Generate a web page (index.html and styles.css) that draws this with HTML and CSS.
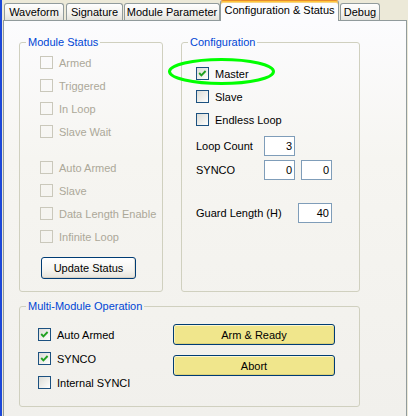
FILE: index.html
```html
<!DOCTYPE html>
<html>
<head>
<meta charset="utf-8">
<title>Configuration &amp; Status</title>
<link rel="stylesheet" href="styles.css">
</head>
<body>
<div class="window">
  <div class="tabs">
    <div class="tab t-wave">Waveform</div>
    <div class="tab t-sig">Signature</div>
    <div class="tab t-mod">Module Parameter</div>
    <div class="tab tab-active t-conf">Configuration &amp; Status</div>
    <div class="tab t-dbg">Debug</div>
  </div>
  <div class="panel">
    <div class="top-row">
      <fieldset class="group g-status">
        <legend>Module Status</legend>
        <div class="status-body">
          <div class="cb-list first">
            <div class="cb disabled"><span class="box"></span>Armed</div>
            <div class="cb disabled"><span class="box"></span>Triggered</div>
            <div class="cb disabled"><span class="box"></span>In Loop</div>
            <div class="cb disabled"><span class="box"></span>Slave Wait</div>
          </div>
          <div class="cb-list second">
            <div class="cb disabled"><span class="box"></span>Auto Armed</div>
            <div class="cb disabled"><span class="box"></span>Slave</div>
            <div class="cb disabled"><span class="box"></span>Data Length Enable</div>
            <div class="cb disabled"><span class="box"></span>Infinite Loop</div>
          </div>
          <button class="btn btn-update">Update Status</button>
        </div>
      </fieldset>
      <fieldset class="group g-config">
        <legend>Configuration</legend>
        <div class="config-body">
          <div class="cb-list config-list">
            <div class="cb"><span class="box"><svg class="check" viewBox="0 0 11 11"><polyline points="2.2,5 4.4,7.3 8.6,3"/></svg></span>Master</div>
            <div class="cb"><span class="box"></span>Slave</div>
            <div class="cb"><span class="box"></span>Endless Loop</div>
          </div>
          <div class="field-row loop-row">
            <span class="field-label short">Loop Count</span>
            <span class="edit">3</span>
          </div>
          <div class="field-row synco-row">
            <span class="field-label short">SYNCO</span>
            <span class="edit">0</span>
            <span class="edit second-edit">0</span>
          </div>
          <div class="field-row guard-row">
            <span class="field-label long">Guard Length (H)</span>
            <span class="edit wide">40</span>
          </div>
        </div>
      </fieldset>
    </div>
    <fieldset class="group g-multi">
      <legend>Multi-Module Operation</legend>
      <div class="multi-body">
        <div class="multi-checks">
          <div class="cb"><span class="box"><svg class="check" viewBox="0 0 11 11"><polyline points="2.2,5 4.4,7.3 8.6,3"/></svg></span>Auto Armed</div>
          <div class="cb"><span class="box"><svg class="check" viewBox="0 0 11 11"><polyline points="2.2,5 4.4,7.3 8.6,3"/></svg></span>SYNCO</div>
          <div class="cb"><span class="box"></span>Internal SYNCI</div>
        </div>
        <div class="multi-buttons">
          <button class="btn btn-yellow">Arm &amp; Ready</button>
          <button class="btn btn-yellow">Abort</button>
        </div>
      </div>
    </fieldset>
  </div>
  <svg class="highlight" width="112" height="32" viewBox="0 0 112 32"><ellipse cx="55.5" cy="15.5" rx="52" ry="12"/></svg>
</div>
</body>
</html>
```
FILE: styles.css
```css
* { box-sizing: border-box; }
html, body { margin: 0; padding: 0; }
body {
  width: 408px;
  height: 416px;
  overflow: hidden;
  background: #ece9d8;
  font-family: "Liberation Sans", Arial, sans-serif;
  font-size: 11px;
  color: #000;
}
.window {
  position: relative;
  height: 416px;
  border-left: 2px solid #1c47d8;
  padding-left: 1px;
}

/* tabs */
.tabs {
  display: flex;
  align-items: flex-end;
  height: 20px;
  padding-left: 1px;
}
.tab {
  height: 17px;
  border: 1px solid #919b9c;
  border-bottom: 0;
  border-radius: 3px 3px 0 0;
  background: linear-gradient(#fefefe, #f4f3ef 55%, #e4e3dc);
  text-align: center;
  line-height: 16px;
  white-space: nowrap;
}
.t-wave { width: 60px; margin-right: 2px; }
.t-sig { width: 57px; margin-right: 1px; }
.t-mod { width: 96px; }
.t-conf { width: 119px; }
.t-dbg { width: 40px; margin-left: 1px; }
.tab-active {
  position: relative;
  z-index: 1;
  height: 21px;
  margin-bottom: -1px;
  border-top: 1px solid #e68b2c;
  box-shadow: inset 0 1px 0 #ffc73c, inset 0 2px 0 #f8d383;
  background: #fcfcfe;
  padding-top: 2px;
  line-height: 14px;
}

/* panel */
.panel {
  width: 404px;
  height: 396px;
  border: 1px solid #919b9c;
  border-bottom: 0;
  background: linear-gradient(#fcfcfe, #f6f5f1 35%, #f1f0ec);
  padding: 15px 0 0 15px;
}
.top-row {
  display: flex;
  gap: 18px;
}
fieldset.group {
  margin: 0;
  padding: 0;
  border: 1px solid #d0d0bf;
  border-radius: 3px;
  min-width: 0;
}
fieldset.group legend {
  margin-left: 6px;
  padding: 0 2px;
  color: #0046d5;
  line-height: 13px;
  font-size: 11px;
}
fieldset.g-status { width: 144px; height: 256px; }
fieldset.g-config { width: 179px; height: 256px; }
fieldset.g-multi { width: 341px; height: 107px; margin-top: 8px; }

/* checkboxes */
.cb {
  display: flex;
  align-items: center;
  height: 23px;
  white-space: nowrap;
}
.box {
  flex: none;
  width: 13px;
  height: 13px;
  margin-right: 6px;
  border: 1px solid #1c5180;
  background: linear-gradient(135deg, #dcdcd7, #f4f4f1 70%, #fff);
  display: flex;
}
.check {
  width: 11px;
  height: 11px;
  fill: none;
  stroke: #21a121;
  stroke-width: 1.9;
}
.cb.disabled { color: #aca899; }
.cb.disabled .box {
  border-color: #cac8bb;
  background: transparent;
}

/* module status */
.status-body { padding-left: 20px; }
.cb-list.first { margin-top: 2px; }
.cb-list.second { margin-top: 13px; }

.btn {
  display: block;
  font: inherit;
  color: #000;
  padding: 0;
  border: 1px solid #003c74;
  border-radius: 3px;
  cursor: default;
}
.btn-update {
  width: 95px;
  height: 22px;
  margin: 9px 0 0 1px;
  background: linear-gradient(#ffffff, #f5f4f0 60%, #e6e3da);
  box-shadow: inset 0 -1px 0 #d6d0c5, inset -1px 0 0 #e3e0d6;
}
.btn-yellow {
  width: 162px;
  height: 21px;
  background: #f0e68c;
  box-shadow: inset 0 1px 0 #fbf6d2, inset 1px 0 0 #f7f0b8, inset 0 -1px 0 #dcd27a, inset -1px 0 0 #e2d884;
}

/* configuration */
.config-body { padding-left: 14px; }
.config-list { margin-top: 13px; }
.field-row {
  display: flex;
  align-items: center;
  height: 20px;
}
.loop-row { margin-top: 5px; }
.synco-row { margin-top: 4px; }
.guard-row { margin-top: 23px; }
.field-label { white-space: nowrap; }
.field-label.short { width: 68px; }
.field-label.long { width: 102px; }
.edit {
  width: 31px;
  height: 20px;
  border: 1px solid #7f9db9;
  background: #fff;
  text-align: right;
  padding-right: 2px;
  line-height: 18px;
}
.edit.second-edit { margin-left: 6px; }
.edit.wide { width: 34px; }

/* multi-module */
.multi-body {
  display: flex;
  padding-left: 18px;
  margin-top: 10px;
}
.multi-checks {
  width: 135px;
  display: flex;
  flex-direction: column;
  gap: 1px;
}
.multi-buttons {
  display: flex;
  flex-direction: column;
  gap: 10px;
  margin-top: 1px;
}

/* annotation overlay */
.highlight {
  position: absolute;
  left: 164px;
  top: 56px;
  fill: none;
  stroke: #0f0;
  stroke-width: 3;
}
```
